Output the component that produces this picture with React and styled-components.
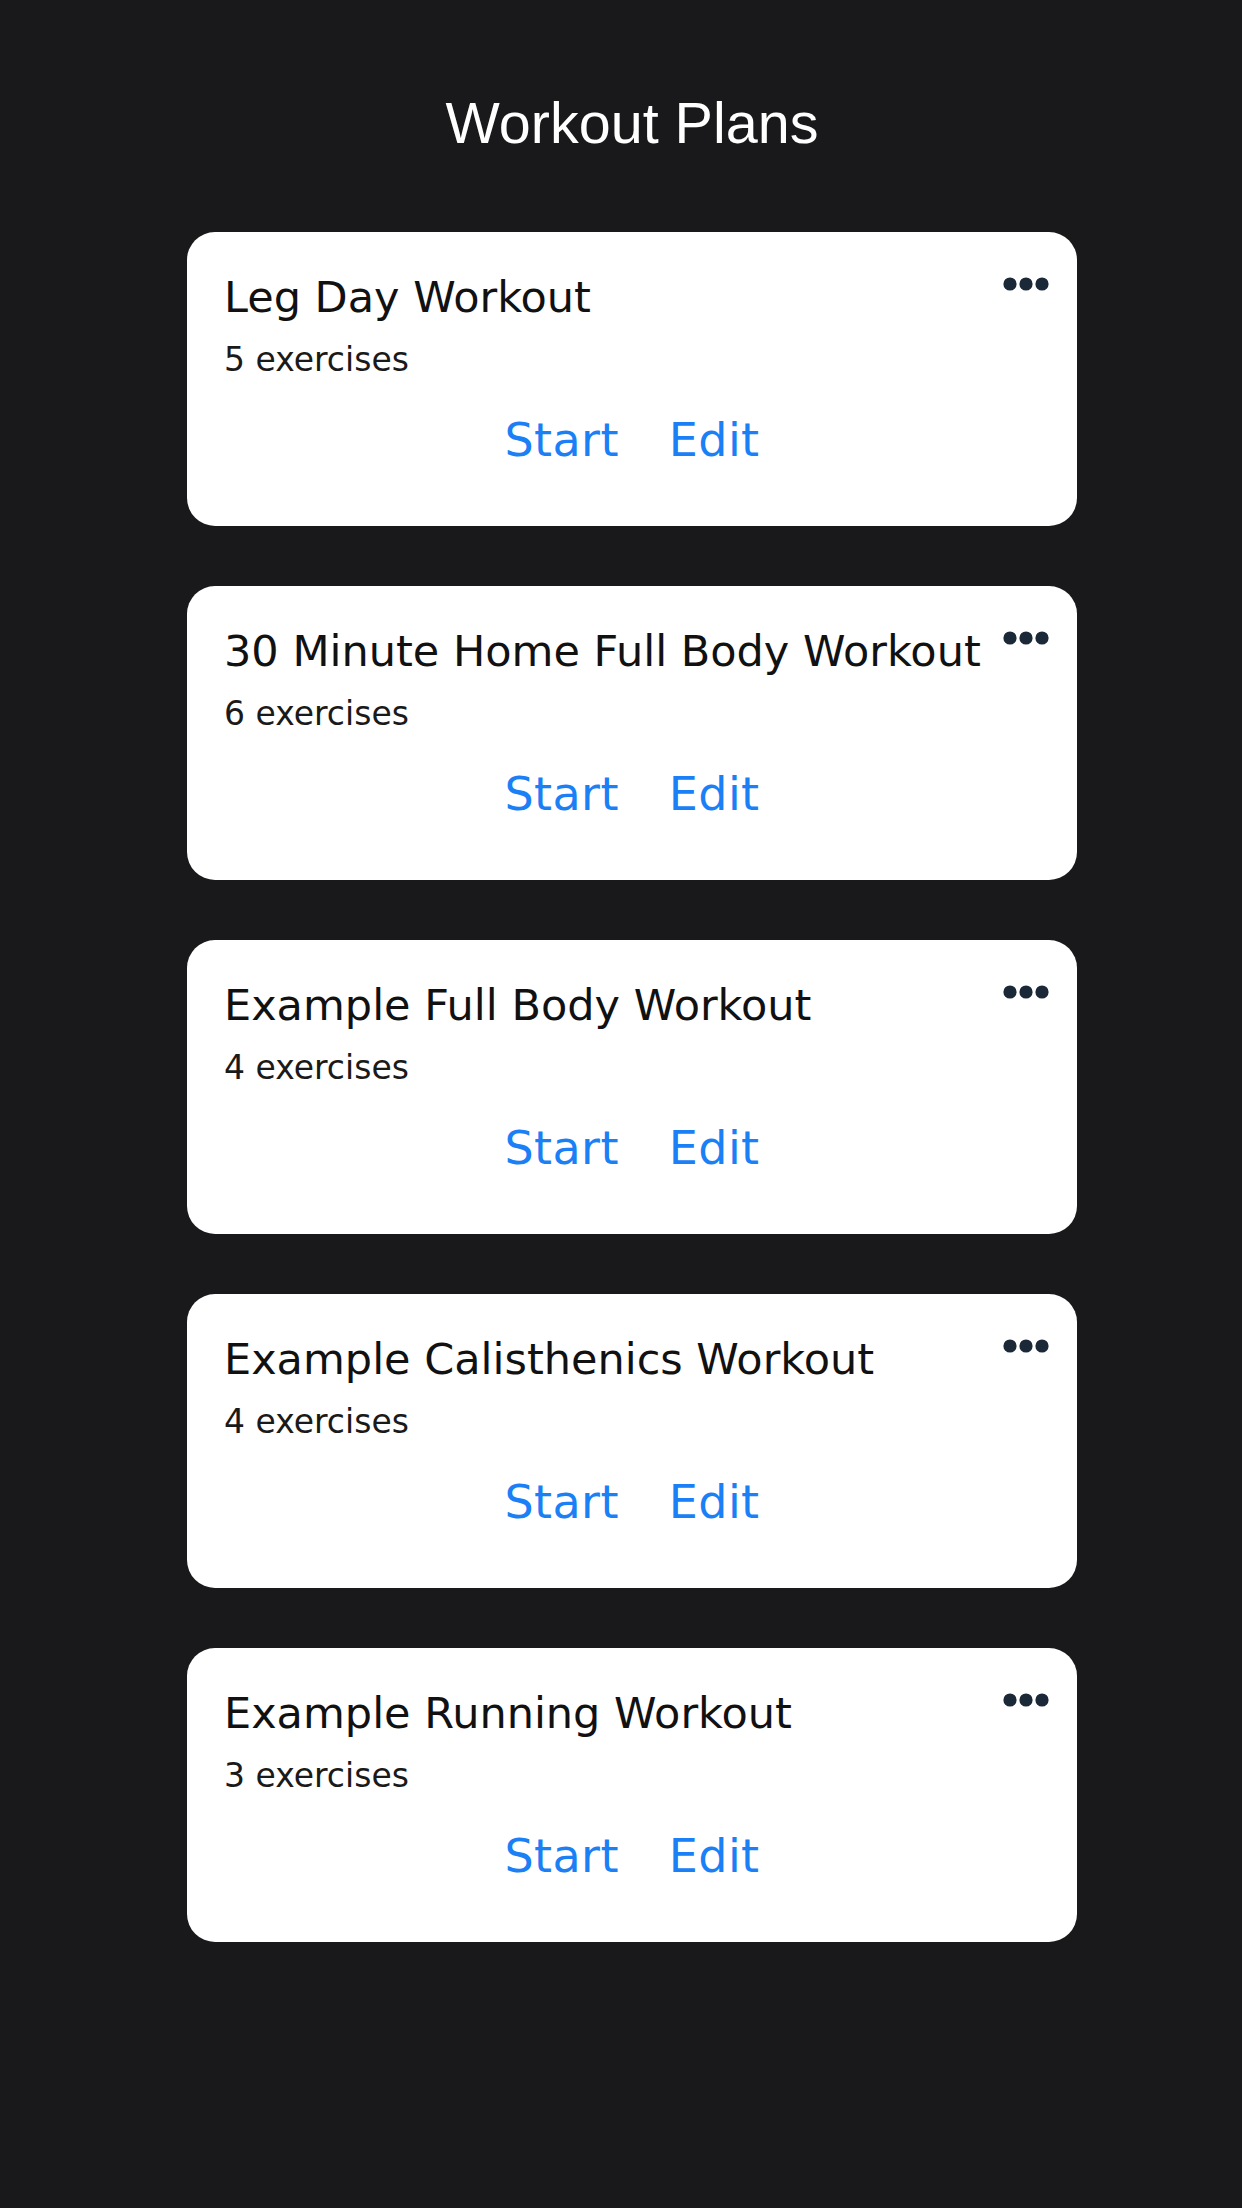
import React from "react";
import styled, { createGlobalStyle } from "styled-components";

const plans = [
  { name: "Leg Day Workout", count: 5 },
  { name: "30 Minute Home Full Body Workout", count: 6 },
  { name: "Example Full Body Workout", count: 4 },
  { name: "Example Calisthenics Workout", count: 4 },
  { name: "Example Running Workout", count: 3 },
];

const GlobalStyle = createGlobalStyle`
  html, body {
    margin: 0;
    padding: 0;
    background: #19191b;
  }
`;

const Page = styled.div`
  min-height: 100vh;
  background: #19191b;
  padding: 91px 0 0 22px;
  box-sizing: border-box;
  display: flex;
  flex-direction: column;
  align-items: center;
`;

const Heading = styled.h1`
  margin: 0;
  font-family: "Liberation Sans", Arial, sans-serif;
  font-weight: 400;
  font-size: 57.5px;
  line-height: 64px;
  color: #ffffff;
`;

const List = styled.div`
  margin-top: 77px;
  display: flex;
  flex-direction: column;
  gap: 60px;
  width: 890px;
`;

const Card = styled.div`
  background: #ffffff;
  border-radius: 28px;
  padding: 40px 28px 60px 37px;
  box-sizing: border-box;
  height: 294px;
  display: flex;
  flex-direction: column;
  font-family: "DejaVu Sans", sans-serif;
`;

const HeaderRow = styled.div`
  display: flex;
  align-items: flex-start;
  justify-content: space-between;
`;

const PlanName = styled.div`
  font-size: 43px;
  line-height: 50px;
  color: #111111;
  white-space: nowrap;
`;

const MoreButton = styled.button`
  border: none;
  background: none;
  padding: 0;
  margin-top: 5px;
  display: flex;
  flex-shrink: 0;
  cursor: pointer;
`;

const Count = styled.div`
  margin-top: 19px;
  font-size: 33px;
  line-height: 38px;
  color: #1a1a1a;
`;

const Actions = styled.div`
  margin-top: 35px;
  margin-left: -9px;
  display: flex;
  justify-content: center;
  gap: 50px;
`;

const ActionLink = styled.button`
  border: none;
  background: none;
  padding: 0;
  font-family: "DejaVu Sans", sans-serif;
  font-size: 46px;
  letter-spacing: 0.4px;
  line-height: 52px;
  color: #1b7ff5;
  cursor: pointer;
`;

const Dots = () => (
  <svg width="46" height="14" viewBox="0 0 46 14">
    <circle cx="7" cy="7" r="6.6" fill="#1b2838" />
    <circle cx="23" cy="7" r="6.6" fill="#1b2838" />
    <circle cx="39" cy="7" r="6.6" fill="#1b2838" />
  </svg>
);

const PlanCard = ({ plan }) => (
  <Card>
    <HeaderRow>
      <PlanName>{plan.name}</PlanName>
      <MoreButton aria-label="More">
        <Dots />
      </MoreButton>
    </HeaderRow>
    <Count>{plan.count} exercises</Count>
    <Actions>
      <ActionLink>Start</ActionLink>
      <ActionLink>Edit</ActionLink>
    </Actions>
  </Card>
);

const App = () => {
  return (
    <>
      <GlobalStyle />
      <Page>
        <Heading>Workout Plans</Heading>
        <List>
          {plans.map((p) => (
            <PlanCard key={p.name} plan={p} />
          ))}
        </List>
      </Page>
    </>
  );
};

export default App;
